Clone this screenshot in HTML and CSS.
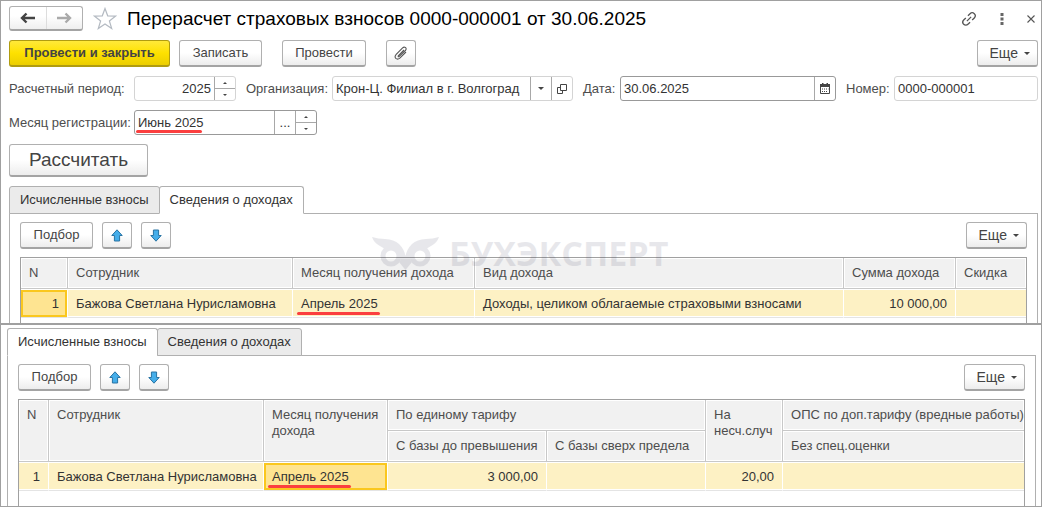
FILE: index.html
```
<!DOCTYPE html>
<html lang="ru">
<head>
  <meta charset="UTF-8">
  <meta name="viewport" content="width=device-width, initial-scale=1.0">
  <title>Перерасчет страховых взносов</title>
  <link rel="stylesheet" href="styles.css">
</head>
<body>
  <svg class="sprite" aria-hidden="true">
    <symbol id="arrow-up" viewBox="0 0 12 13">
      <path d="M6 .8 11.2 6.5H8.6V12H3.4V6.5H.8Z" fill="#45aeea" stroke="#2873a3" stroke-linejoin="round"/>
    </symbol>
    <symbol id="caret" viewBox="0 0 6 3">
      <path d="M0 0h6L3 3Z" fill="#444"/>
    </symbol>
  </svg>

  <main class="pane">
    <header class="title-bar">
      <div class="history">
        <button aria-label="Назад"><svg width="16" height="12" viewBox="0 0 16 12"><path d="M6.500 1.500 2 6l4.500 4.500M2 6h13" fill="none" stroke="#444" stroke-width="2.4"/></svg></button>
        <button aria-label="Вперед"><svg width="16" height="12" viewBox="0 0 16 12"><path d="m9.500 1.500 4.500 4.500-4.500 4.500M14 6H1" fill="none" stroke="#aaa" stroke-width="2.4"/></svg></button>
      </div>
      <button class="plain" aria-label="В избранное"><svg width="24" height="24" viewBox="0 0 24 24"><path d="m12 1.5 2.7 7.3 8 .3-6.3 4.8 2.3 7.6-6.7-4.5-6.7 4.5 2.3-7.6L1.3 9.1l8-.3Z" fill="none" stroke="#b4bac2" stroke-width="1.2"/></svg></button>
      <h1>Перерасчет страховых взносов 0000-000001 от 30.06.2025</h1>
      <div class="window-tools">
        <button class="plain" aria-label="Ссылка"><svg width="16" height="16" viewBox="0 0 16 16"><g transform="rotate(-45 8 8)" fill="none" stroke="#555" stroke-width="1.300"><path d="M6.500 11H3.500a3 3 0 0 1 0-6h3M9.500 5h3a3 3 0 0 1 0 6h-3M5 8h6"/></g></svg></button>
        <button class="plain" aria-label="Меню"><svg width="4" height="12" viewBox="0 0 4 12"><path d="M.5 0h3v3h-3zM.5 4.500h3v3h-3zM.5 9h3v3h-3z" fill="#666"/></svg></button>
        <button class="plain" aria-label="Закрыть"><svg width="8" height="8" viewBox="0 0 8 8"><path d="m.5.5 7 7M7.500.5l-7 7" stroke="#555" stroke-width="1.1"/></svg></button>
      </div>
    </header>

    <div class="commands">
      <button class="btn btn-main">Провести и закрыть</button>
      <button class="btn btn-save">Записать</button>
      <button class="btn btn-post">Провести</button>
      <button class="btn btn-icon" aria-label="Файлы"><svg width="14" height="14" viewBox="0 0 14 14"><path d="m10 4-5.500 5.500q-.8 1.300.4 1.300l6.600-6.300q1.400-2-.2-3.100-1.300-.8-2.700.4L2.200 8.300q-2 2.400-.4 4.100 1.800 1.500 4-.3L12 6" fill="none" stroke="#555" stroke-width="1.100"/></svg></button>
      <button class="btn btn-more">Еще <svg width="6" height="3"><use href="#caret"/></svg></button>
    </div>

    <div class="fields">
      <label class="label-wide" for="period">Расчетный период:</label>
      <div class="field light period">
        <input id="period" type="text" value="2025">
        <div class="spin"><button aria-label="Больше"></button><button aria-label="Меньше"></button></div>
      </div>
      <label class="label-org" for="org">Организация:</label>
      <div class="field light org">
        <input id="org" type="text" value="Крон-Ц. Филиал в г. Волгоград">
        <button class="pick" aria-label="Выбрать"><svg width="6" height="3"><use href="#caret"/></svg></button>
        <button class="pick" aria-label="Открыть"><svg width="10" height="10" viewBox="0 0 10 10"><path d="M3.500.5h6v6h-6zM3.500 3.500h-3v6h5v-3" fill="none" stroke="#444"/></svg></button>
      </div>
      <label class="label-date" for="date">Дата:</label>
      <div class="field date">
        <input id="date" type="text" value="30.06.2025">
        <button class="pick" aria-label="Календарь"><svg width="10" height="11" viewBox="0 0 10 11"><path d="M1 1.500h8.500v9H.5v-9z" fill="#fff" stroke="#444"/><path d="M0 1h10v3H0zM2 0h1.500v2H2zM6.500 0H8v2H6.500zM2 5.500h1v1H2zM4 5.500h1v1H4zM6 5.500h1v1H6zM8 5.500h.5v1H8zM2 8h1v1H2zM4 8h1v1H4zM6 8h1v1H6z" fill="#444"/></svg></button>
      </div>
      <label class="label-number" for="number">Номер:</label>
      <div class="field light number">
        <input id="number" type="text" value="0000-000001">
      </div>
    </div>

    <div class="fields">
      <label class="label-wide" for="month">Месяц регистрации:</label>
      <div class="field month">
        <input id="month" type="text" value="Июнь 2025">
        <button class="pick" aria-label="Выбрать месяц">...</button>
        <div class="spin"><button aria-label="Больше"></button><button aria-label="Меньше"></button></div>
      </div>
    </div>

    <button class="btn btn-big">Рассчитать</button>

    <div class="tabs">
      <button>Исчисленные взносы</button>
      <button class="active">Сведения о доходах</button>
    </div>
    <section class="panel">
      <div class="toolbar">
        <button class="btn btn-add">Подбор</button>
        <button class="btn btn-icon" aria-label="Вверх"><svg width="12" height="13"><use href="#arrow-up"/></svg></button>
        <button class="btn btn-icon" aria-label="Вниз"><svg class="down" width="12" height="13"><use href="#arrow-up"/></svg></button>
        <button class="btn btn-more">Еще <svg width="6" height="3"><use href="#caret"/></svg></button>
        <div class="watermark">
          <svg width="68" height="33" viewBox="0 0 68 33">
            <g fill="none" stroke="currentColor" stroke-width="5"><circle cx="19" cy="19" r="8"/><circle cx="48" cy="19" r="8"/></g>
            <path d="M0 0q6 2 13 2 9 .5 14 5 5 5 6.500 12Q35 12 40 7q5-4.500 14-5 7 0 13-2-2 6-8 9l-5 3q-4-3.500-9-2-6 2-7 9 0 4 2 6l-6.500 8-6.500-8q2-2 2-6-1-7-7-9-5-1.500-9 2L8 9Q2 6 0 0Z" fill="currentColor"/>
          </svg>
          <span>БУХЭКСПЕРТ</span>
        </div>
      </div>
      <div class="grid">
        <table>
          <colgroup><col class="w-num"><col class="w-name"><col class="w-month"><col><col class="w-sum"><col class="w-disc"></colgroup>
          <thead>
            <tr><th>N</th><th>Сотрудник</th><th>Месяц получения дохода</th><th>Вид дохода</th><th>Сумма дохода</th><th>Скидка</th></tr>
          </thead>
          <tbody>
            <tr><td class="right selected">1</td><td>Бажова Светлана Нурисламовна</td><td><span class="mark">Апрель 2025</span></td><td>Доходы, целиком облагаемые страховыми взносами</td><td class="right">10 000,00</td><td></td></tr>
          </tbody>
        </table>
      </div>
    </section>
  </main>

  <section class="pane pane-bottom">
    <div class="tabs">
      <button class="active">Исчисленные взносы</button>
      <button>Сведения о доходах</button>
    </div>
    <div class="panel">
      <div class="toolbar">
        <button class="btn btn-add">Подбор</button>
        <button class="btn btn-icon" aria-label="Вверх"><svg width="12" height="13"><use href="#arrow-up"/></svg></button>
        <button class="btn btn-icon" aria-label="Вниз"><svg class="down" width="12" height="13"><use href="#arrow-up"/></svg></button>
        <button class="btn btn-more">Еще <svg width="6" height="3"><use href="#caret"/></svg></button>
      </div>
      <div class="grid">
        <table>
          <colgroup><col class="w-num-s"><col class="w-name-s"><col class="w-month-s"><col class="w-base"><col class="w-base"><col class="w-accident"><col></colgroup>
          <thead>
            <tr><th rowspan="2">N</th><th rowspan="2">Сотрудник</th><th rowspan="2">Месяц получения дохода</th><th colspan="2">По единому тарифу</th><th rowspan="2">На несч.случ</th><th class="one-line">ОПС по доп.тарифу (вредные работы)</th></tr>
            <tr><th>С базы до превышения</th><th>С базы сверх предела</th><th>Без спец.оценки</th></tr>
          </thead>
          <tbody>
            <tr><td class="right">1</td><td>Бажова Светлана Нурисламовна</td><td class="selected"><span class="mark">Апрель 2025</span></td><td class="right">3 000,00</td><td></td><td class="right">20,00</td><td></td></tr>
          </tbody>
        </table>
      </div>
    </div>
  </section>
</body>
</html>
```

FILE: styles.css
```
* {
  box-sizing: border-box;
}
body {
  display: flex;
  flex-direction: column;
  min-height: 100vh;
  margin: 0;
  border: 1px solid #a0a0a0;
  background: #fff;
  color: #333;
  font: 13px/16px "Liberation Sans", Arial, sans-serif;
}
button, input {
  margin: 0;
  padding: 0;
  font: inherit;
  color: inherit;
}
.sprite {
  position: absolute;
  width: 0;
  height: 0;
}
.pane {
  padding: 5px 3px 0 8px;
  border-bottom: 2px solid #a0a0a0;
}
.pane-bottom {
  flex: 1;
  display: flex;
  flex-direction: column;
  padding: 3px 5px 0 6px;
  border-bottom: none;
}

/* title */
.title-bar {
  display: flex;
  align-items: center;
  height: 25px;
  margin-bottom: 9px;
}
.history {
  display: flex;
  width: 74px;
  height: 25px;
  margin-right: 10px;
  border: 1px solid #b0b0b0;
  border-bottom: 2px solid #a4a4a4;
  border-radius: 3px;
  background: linear-gradient(#fff 40%, #efefef);
}
.history button {
  flex: 1;
  display: flex;
  align-items: center;
  justify-content: center;
  border: none;
  background: none;
}
.history button + button {
  border-left: 1px solid #ddd;
}
.plain {
  display: flex;
  border: none;
  background: none;
}
h1 {
  margin: 0 0 0 10px;
  color: #000;
  font-size: 19px;
  font-weight: normal;
  line-height: 24px;
}
.window-tools {
  display: flex;
  align-items: center;
  gap: 23px;
  margin-left: auto;
  padding-right: 3px;
}

/* buttons */
.commands, .toolbar {
  display: flex;
}
.commands {
  margin-bottom: 9px;
}
.btn {
  height: 27px;
  border: 1px solid #b0b0b0;
  border-bottom: 2px solid #a4a4a4;
  border-radius: 3px;
  background: linear-gradient(#fff 50%, #ededed);
  color: #444;
  line-height: 24px;
}
.btn-main {
  width: 161px;
  border-color: #b09c10;
  background: linear-gradient(#ffe93a, #fee100 50%, #ecce00);
  font-weight: bold;
}
.btn-save {
  width: 83px;
  margin-left: 9px;
}
.btn-post {
  width: 84px;
  margin: 0 20px;
}
.btn-icon {
  display: flex;
  align-items: center;
  justify-content: center;
  width: 30px;
}
.btn-more {
  display: flex;
  align-items: center;
  justify-content: flex-end;
  gap: 6px;
  width: 61px;
  margin-left: auto;
  padding-right: 7px;
  font-size: 14px;
}
.btn-big {
  display: block;
  width: 139px;
  height: 33px;
  margin-bottom: 9px;
  font-size: 19px;
  line-height: 30px;
}
.btn-add {
  width: 73px;
}
.down {
  transform: rotate(180deg);
}

/* form */
.fields {
  display: flex;
  align-items: center;
  margin-bottom: 9px;
  color: #4d4d4d;
}
.label-wide {
  width: 125px;
}
.label-org {
  width: 86px;
}
.label-date {
  width: 37px;
}
.label-number {
  width: 48px;
}
.field {
  position: relative;
  display: flex;
  height: 25px;
  margin-right: 10px;
  border: 1px solid #999;
  border-radius: 3px;
  color: #333;
}
.field.light {
  border-color: #d4d4d4;
}
.field input {
  flex: 1;
  min-width: 0;
  padding: 0 3px;
  border: none;
  outline: none;
  background: none;
}
.period {
  width: 102px;
}
.period input {
  text-align: right;
}
.org {
  width: 241px;
}
.date {
  flex: 1;
}
.number {
  width: 144px;
  margin-right: 0;
}
.month {
  width: 183px;
}
.month::after {
  content: "";
  position: absolute;
  left: 1px;
  bottom: 1px;
  width: 66px;
  height: 3px;
  border-radius: 2px;
  background: #fb3f3f;
}
.pick {
  display: flex;
  align-items: center;
  justify-content: center;
  width: 21px;
  border: none;
  border-left: 1px solid #a8a8a8;
  background: none;
}
.spin {
  display: flex;
  flex-direction: column;
  width: 21px;
  border-left: 1px solid #a8a8a8;
}
.spin button {
  flex: 1;
  display: flex;
  align-items: center;
  justify-content: center;
  border: none;
  background: none;
}
.spin button + button {
  border-top: 1px solid #a8a8a8;
}
.spin button::before {
  content: "";
  border: 2px solid transparent;
  border-top: none;
  border-bottom: 2px solid #444;
}
.spin button + button::before {
  border-top: 2px solid #444;
  border-bottom: none;
}

/* tabs */
.tabs {
  display: flex;
  position: relative;
  height: 28px;
  margin-bottom: -1px;
}
.tabs button {
  padding: 0 10px;
  border: 1px solid #b0b0b0;
  border-radius: 3px 3px 0 0;
  background: #ebebeb;
}
.tabs button + button {
  margin-left: -1px;
}
.tabs .active {
  border-bottom-color: #fff;
  background: #fff;
}
.panel {
  padding: 8px 10px 0;
  border: 1px solid #b0b0b0;
  border-bottom: none;
}
.pane-bottom .panel {
  flex: 1;
  display: flex;
  flex-direction: column;
}
.toolbar {
  position: relative;
  gap: 9px;
  margin-bottom: 8px;
}
.watermark {
  position: absolute;
  top: 15px;
  left: 352px;
  display: flex;
  gap: 9px;
  color: #1e1e46;
  font: bold 34px/33px "Open Sans", sans-serif;
  opacity: 0.1;
  pointer-events: none;
}

/* tables */
.grid {
  padding-bottom: 5px;
  border: 1px solid #a0a0a0;
  border-bottom: none;
}
.pane-bottom .grid {
  flex: 1;
}
table {
  width: 100%;
  table-layout: fixed;
  border-spacing: 0;
}
th {
  height: 31px;
  padding: 7px 8px 6px;
  border-right: 1px solid #c8c8c8;
  border-bottom: 1px solid #c8c8c8;
  background: #f1f1f1;
  box-shadow: inset 0 0 0 1px #fff;
  color: #4d4d4d;
  font-weight: normal;
  text-align: left;
  vertical-align: top;
}
.one-line {
  padding-right: 0;
  white-space: nowrap;
}
td {
  height: 29px;
  padding: 0 8px;
  border-top: 1px solid #fff;
  border-right: 1px solid #fff;
  border-bottom: 1px solid #e4e4e4;
  background: #fdf1c4;
  box-shadow: inset 0 -1px #fff;
  white-space: nowrap;
}
th:last-child, td:last-child {
  border-right: none;
}
.right {
  text-align: right;
}
.selected {
  background: #fee491;
  box-shadow: inset 0 0 0 2px #fac71e;
}
.mark {
  position: relative;
}
.mark::after {
  content: "";
  position: absolute;
  left: -4px;
  right: -2px;
  bottom: -4px;
  height: 3px;
  border-radius: 2px;
  background: #fb3f3f;
}
.w-num { width: 47px; }
.w-name { width: 225px; }
.w-month { width: 182px; }
.w-sum { width: 112px; }
.w-disc { width: 70px; }
.w-num-s { width: 30px; }
.w-name-s { width: 215px; }
.w-month-s { width: 124px; }
.w-base { width: 159px; }
.w-accident { width: 77px; }
```
